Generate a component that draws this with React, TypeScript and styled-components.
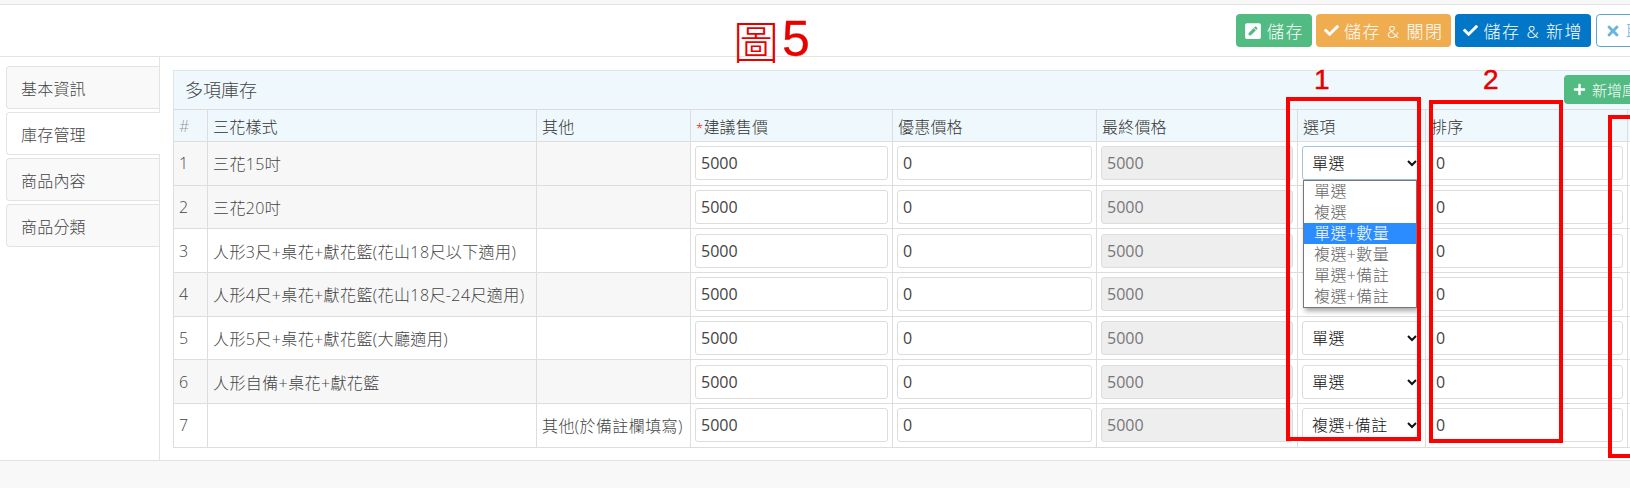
import React from "react";
import styled, { createGlobalStyle } from "styled-components";
import { FaCheck, FaPenSquare, FaPlus, FaTimes } from "react-icons/fa";

const GlobalStyle = createGlobalStyle`
  html, body {
    margin: 0;
    padding: 0;
    background: #fff;
    overflow: hidden;
  }
  * { box-sizing: border-box; }
`;

const fontStack = `"Open Sans", "Noto Sans CJK TC", sans-serif`;

const tabs = ["基本資訊", "庫存管理", "商品內容", "商品分類"];
const options = ["單選", "複選", "單選+數量", "複選+數量", "單選+備註", "複選+備註"];
const columns = [
  { label: "三花樣式", width: 329 },
  { label: "其他", width: 154 },
  { label: "建議售價", width: 202, required: true },
  { label: "優惠價格", width: 204 },
  { label: "最終價格", width: 201 },
  { label: "選項", width: 128 },
  { label: "排序", width: 202 },
];
const rows = [
  { name: "三花15吋", other: "", option: "單選", shaded: true },
  { name: "三花20吋", other: "", option: "單選", shaded: true },
  { name: "人形3尺+桌花+獻花籃(花山18尺以下適用)", other: "", option: "單選", shaded: false },
  { name: "人形4尺+桌花+獻花籃(花山18尺-24尺適用)", other: "", option: "單選", shaded: true },
  { name: "人形5尺+桌花+獻花籃(大廳適用)", other: "", option: "單選", shaded: false },
  { name: "人形自備+桌花+獻花籃", other: "", option: "單選", shaded: true },
  { name: "", other: "其他(於備註欄填寫)", option: "複選+備註", shaded: false },
];

export default function App(): JSX.Element {
  return (
    <>
      <GlobalStyle />
      <Page>
        <TopStrip />
        <Toolbar>
          <ActionButton $bg="#52bb82">
            <FaPenSquare size={18} />
            儲存
          </ActionButton>
          <ActionButton $bg="#efad50">
            <FaCheck size={15} />
            儲存 &amp; 關閉
          </ActionButton>
          <ActionButton $bg="#0277c8">
            <FaCheck size={15} />
            儲存 &amp; 新增
          </ActionButton>
          <CancelButton>
            <FaTimes size={16} />
            取消
          </CancelButton>
        </Toolbar>
        <Main>
          <Sidebar>
            {tabs.map((tab, i) => (
              <Tab key={tab} $active={i === 1}>
                {tab}
              </Tab>
            ))}
          </Sidebar>
          <Content>
            <Panel>
              <PanelHeading>
                多項庫存
                <AddButton>
                  <FaPlus size={13} />
                  新增庫存
                </AddButton>
              </PanelHeading>
              <Table>
                <colgroup>
                  <col style={{ width: 34 }} />
                  {columns.map((c) => (
                    <col key={c.label} style={{ width: c.width }} />
                  ))}
                  <col style={{ width: 120 }} />
                </colgroup>
                <thead>
                  <tr>
                    <HeadCell $muted>#</HeadCell>
                    {columns.map((c) => (
                      <HeadCell key={c.label}>
                        {c.required && <Required>*</Required>}
                        {c.label}
                      </HeadCell>
                    ))}
                    <HeadCell />
                  </tr>
                </thead>
                <tbody>
                  {rows.map((row, i) => (
                    <tr key={i}>
                      <TextCell $shaded={row.shaded}>{i + 1}</TextCell>
                      <TextCell $shaded={row.shaded}>{row.name}</TextCell>
                      <TextCell $shaded={row.shaded}>{row.other}</TextCell>
                      <FieldCell>
                        <PriceInput defaultValue="5000" />
                      </FieldCell>
                      <FieldCell>
                        <PriceInput defaultValue="0" />
                      </FieldCell>
                      <FieldCell>
                        <PriceInput defaultValue="5000" disabled />
                      </FieldCell>
                      <FieldCell>
                        {/* rows 2-4 sit under the open list, only the first one shows its select */}
                        {(i === 0 || i > 3) && (
                          <OptionSelect defaultValue={row.option} $focused={i === 0}>
                            {options.map((o) => (
                              <option key={o}>{o}</option>
                            ))}
                          </OptionSelect>
                        )}
                        {i === 0 && (
                          <OptionList>
                            {options.map((o) => (
                              <OptionItem key={o} $active={o === "單選+數量"}>
                                {o}
                              </OptionItem>
                            ))}
                          </OptionList>
                        )}
                      </FieldCell>
                      <FieldCell>
                        <PriceInput defaultValue="0" />
                      </FieldCell>
                      <FieldCell />
                    </tr>
                  ))}
                </tbody>
              </Table>
            </Panel>
          </Content>
        </Main>
        <Footer />
        <Title>
          <TitleHan>圖</TitleHan>5
        </Title>
        <MarkLabel $left={1314}>1</MarkLabel>
        <MarkLabel $left={1483}>2</MarkLabel>
        <MarkBox $left={1286} $top={97} $width={135} $height={344} />
        <MarkBox $left={1429} $top={100} $width={134} $height={343} />
        <MarkBox $left={1608} $top={115} $width={60} $height={343} />
      </Page>
    </>
  );
}

const Page = styled.div`
  position: relative;
  width: 1630px;
  height: 488px;
  overflow: hidden;
  display: flex;
  flex-direction: column;
  font-family: ${fontStack};
  font-size: 16px;
  font-weight: 300;
  color: #444;
`;

const TopStrip = styled.div`
  height: 5px;
  background: #f8f8f8;
  border-bottom: 1px solid #e3e3e3;
`;

const Toolbar = styled.div`
  height: 52px;
  padding: 9px 0 0 1236px;
  display: flex;
  gap: 4px;
  align-items: flex-start;
  border-bottom: 1px solid #e3e3e3;
`;

const ActionButton = styled.div<{ $bg: string }>`
  flex-shrink: 0;
  height: 33px;
  padding: 0 8px;
  display: flex;
  align-items: center;
  gap: 5px;
  border-radius: 4px;
  background: ${(p) => p.$bg};
  color: #fff;
  font-size: 17px;
  letter-spacing: 1.5px;
  white-space: nowrap;
`;

const CancelButton = styled(ActionButton).attrs({ $bg: "#fff" })`
  border: 1px solid #5aa7d3;
  color: #6bb5dd;
  margin-left: 1px;
`;

const Main = styled.div`
  height: 403px;
  display: flex;
`;

const Sidebar = styled.div`
  width: 160px;
  flex-shrink: 0;
  padding: 9px 0 0 6px;
  display: flex;
  flex-direction: column;
  gap: 3px;
  border-right: 1px solid #e3e3e3;
`;

const Tab = styled.div<{ $active?: boolean }>`
  height: 43px;
  padding-left: 14px;
  display: flex;
  align-items: center;
  background: ${(p) => (p.$active ? "#fff" : "#f9f9f9")};
  border: 1px solid #e3e3e3;
  border-right: none;
  border-radius: 4px 0 0 4px;
  margin-right: ${(p) => (p.$active ? "-1px" : "0")};
  position: relative;
  letter-spacing: 0.2px;
`;

const Content = styled.div`
  flex: 1;
  min-width: 0;
  padding: 13px 0 0 13px;
`;

const Panel = styled.div`
  width: 1600px;
`;

const PanelHeading = styled.div`
  position: relative;
  height: 39px;
  padding: 0 0 3px 11px;
  display: flex;
  align-items: center;
  background: #eff9fd;
  border: 1px solid #dfe4e6;
  border-bottom: none;
  font-size: 18px;
`;

const AddButton = styled.div`
  position: absolute;
  left: 1390px;
  top: 4px;
  height: 29px;
  padding: 0 9px;
  display: flex;
  align-items: center;
  gap: 6px;
  border-radius: 4px;
  background: #52bb82;
  color: #fff;
  font-size: 15px;
  white-space: nowrap;
`;

const Table = styled.table`
  table-layout: fixed;
  width: 1574px;
  border-collapse: collapse;
`;

const HeadCell = styled.th<{ $muted?: boolean }>`
  height: 32px;
  padding: 0 5px;
  text-align: left;
  font-weight: 300;
  background: #eff9fd;
  border: 1px solid #ddd;
  letter-spacing: 0.2px;
  color: ${(p) => (p.$muted ? "#999" : "#333")};
`;

const Required = styled.span`
  color: #e00;
  font-size: 13px;
`;

const TextCell = styled.td<{ $shaded?: boolean }>`
  height: 43.7px;
  padding: 0 5px;
  white-space: nowrap;
  letter-spacing: 0.4px;
  background: ${(p) => (p.$shaded ? "#f7f7f7" : "#fff")};
  border: 1px solid #ddd;
`;

const FieldCell = styled.td`
  position: relative;
  height: 43.7px;
  padding: 0 4px;
  border: 1px solid #ddd;
`;

const PriceInput = styled.input`
  display: block;
  width: 100%;
  height: 34px;
  padding: 0 5px;
  font-family: ${fontStack};
  font-size: 16px;
  font-weight: 400;
  color: #444;
  border: 1px solid #ddd;
  border-radius: 3px;
  background: #fff;
  &:disabled {
    background: #eee;
    color: #777;
  }
`;

const OptionSelect = styled.select<{ $focused?: boolean }>`
  display: block;
  width: 100%;
  height: 34px;
  padding: 0 5px;
  font-family: ${fontStack};
  font-size: 16px;
  font-weight: 300;
  letter-spacing: 0.5px;
  color: #111;
  background: #fff;
  border: 1px solid ${(p) => (p.$focused ? "#9fc3e0" : "#ddd")};
  border-radius: 3px;
`;

const OptionList = styled.div`
  position: absolute;
  left: 5px;
  top: 38px;
  width: 114px;
  z-index: 2;
  background: #fff;
  border: 1px solid #777;
  box-shadow: 2px 3px 5px rgba(0, 0, 0, 0.35);
`;

const OptionItem = styled.div<{ $active?: boolean }>`
  height: 21px;
  line-height: 21px;
  padding-left: 10px;
  white-space: nowrap;
  letter-spacing: 0.4px;
  background: ${(p) => (p.$active ? "#2a8cff" : "#fff")};
  color: ${(p) => (p.$active ? "#fff" : "#666")};
`;

const Footer = styled.div`
  flex: 1;
  background: #f8f8f8;
  border-top: 1px solid #e3e3e3;
`;

const Title = styled.div`
  position: absolute;
  left: 733px;
  top: 8px;
  display: flex;
  align-items: center;
  color: #e60000;
  font-size: 50px;
  font-weight: 400;
  line-height: 62px;
  font-family: "Liberation Sans", sans-serif;
  -webkit-text-stroke: 0.3px #e60000;
`;

const TitleHan = styled.span`
  font-family: "Noto Sans CJK TC", sans-serif;
  font-weight: 300;
  font-size: 46px;
  margin-right: 3px;
  -webkit-text-stroke: 0;
`;

const MarkLabel = styled.div<{ $left: number }>`
  position: absolute;
  left: ${(p) => p.$left}px;
  top: 65px;
  color: #e60000;
  font-family: "Liberation Sans", sans-serif;
  font-size: 28px;
  font-weight: 400;
  line-height: 30px;
  -webkit-text-stroke: 0.5px #e60000;
`;

const MarkBox = styled.div<{ $left: number; $top: number; $width: number; $height: number }>`
  position: absolute;
  left: ${(p) => p.$left}px;
  top: ${(p) => p.$top}px;
  width: ${(p) => p.$width}px;
  height: ${(p) => p.$height}px;
  border: 4px solid #f00;
  z-index: 3;
`;
